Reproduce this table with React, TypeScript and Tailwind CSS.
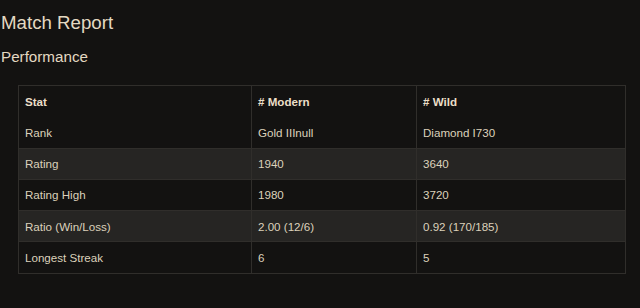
const rows = [
  ["Rank", "Gold IIInull", "Diamond I730"],
  ["Rating", "1940", "3640"],
  ["Rating High", "1980", "3720"],
  ["Ratio (Win/Loss)", "2.00 (12/6)", "0.92 (170/185)"],
  ["Longest Streak", "6", "5"],
];

const cell = "h-[31.3px] px-[6px] align-middle border-x border-[#302e2b]";

export default function App() {
  return (
    <div className="h-[308px] w-[640px] overflow-hidden bg-[#131211] pl-[1px] font-['Liberation_Sans',Arial,sans-serif] text-[#e4d9c2]">
      <h1 className="pt-[10px] text-[18.7px] leading-[26px]">Match Report</h1>
      <h2 className="mt-[11px] text-[15.2px] leading-[20px]">Performance</h2>
      <table className="mt-[18px] ml-[17px] w-[607px] table-fixed border-collapse border border-[#302e2b] text-[11.6px] text-[#dcd1bb]">
        <colgroup>
          <col className="w-[233px]" />
          <col className="w-[165px]" />
          <col className="w-[209px]" />
        </colgroup>
        <tbody>
          <tr>
            <th className={`${cell} text-left font-bold text-[#ebdfc8]`}>Stat</th>
            <th className={`${cell} text-left font-bold text-[#ebdfc8]`}># Modern</th>
            <th className={`${cell} text-left font-bold text-[#ebdfc8]`}># Wild</th>
          </tr>
          {rows.map((r, i) => (
            <tr
              key={r[0]}
              className={`${i > 0 ? "border-t border-[#302e2b]" : ""} ${i % 2 === 1 ? "bg-[#262523]" : ""}`}
            >
              {r.map((v) => (
                <td key={v} className={cell}>
                  {v}
                </td>
              ))}
            </tr>
          ))}
        </tbody>
      </table>
    </div>
  );
}
